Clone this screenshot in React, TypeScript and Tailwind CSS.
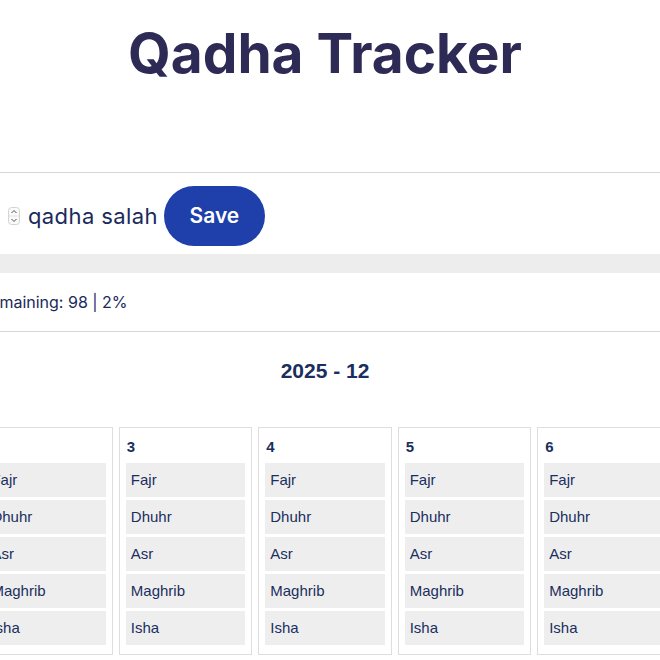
const prayers = ['Fajr', 'Dhuhr', 'Asr', 'Maghrib', 'Isha'];
const days = [1, 2, 3, 4, 5, 6, 7];

function Spinner() {
  return (
    <svg width="12" height="18" viewBox="0 0 12 18" className="block">
      <rect x="0.5" y="0.5" width="11" height="17" rx="3" fill="#fafafa" stroke="#d4d4d4" />
      <line x1="1" y1="9" x2="11" y2="9" stroke="#e2e2e2" />
      <path d="M3.5 6 L6 3.5 L8.5 6" fill="none" stroke="#555" strokeWidth="1" />
      <path d="M3.5 12 L6 14.5 L8.5 12" fill="none" stroke="#555" strokeWidth="1" />
    </svg>
  );
}

function DayCard({ day }: { day: number }) {
  return (
    <div className="border border-[#dedede] px-[6px] pt-[10px] pb-[9px]">
      <div className="font-['Liberation_Sans',Arial,sans-serif] text-[15px] leading-[18px] font-bold text-[#1b2f5e] pl-[1px] mb-[7px]">
        {day}
      </div>
      <div className="flex flex-col gap-[3px]">
        {prayers.map((p) => (
          <div
            key={p}
            className="h-[34px] bg-[#eeeeee] flex items-center pl-[5px] font-['Liberation_Sans',Arial,sans-serif] text-[15px] text-[#1b2f5e]"
          >
            {p}
          </div>
        ))}
      </div>
    </div>
  );
}

export default function App() {
  return (
    <div className="w-[660px] h-[660px] overflow-hidden bg-white">
      <div className="flex justify-center">
        <div className="w-[970px] shrink-0 mr-[10px]">
          <h1 className="mt-[21px] text-center text-[55px] leading-[64px] font-bold text-[#2d2b55] font-['Inter',sans-serif]">
            Qadha Tracker
          </h1>

          <div className="mt-[87px] border-t border-[#d6d6d6]">
            <div className="flex items-center pl-[140px] pt-[13px] font-['Inter',sans-serif] text-[#1a2a5c]">
              <div className="w-[42px] h-[28px] flex items-center justify-end pr-[2px]">
                <Spinner />
              </div>
              <span className="ml-[6px] text-[22px] tracking-[0.4px]">qadha salah</span>
              <button className="ml-[6px] w-[101px] h-[60px] rounded-full bg-[#1f3faa] text-white text-[21px] font-semibold">
                Save
              </button>
            </div>
            <div className="mt-[8px] h-[19px] bg-[#ededed]">
              <div className="h-full w-[2%] bg-[#ededed]" />
            </div>
            <div className="pl-[140px] h-[58px] flex items-center font-['Inter',sans-serif] text-[16px] text-[#1a2a5c]">
              Remaining: 98 | 2%
            </div>
          </div>

          <div className="border-t border-[#d6d6d6]">
            <div className="pt-[27px] text-center font-['Liberation_Sans',Arial,sans-serif] text-[21px] leading-[24px] font-bold text-[#1b2f5e]">
              2025 - 12
            </div>
            <div className="mt-[44px] grid grid-cols-7 gap-[6px]">
              {days.map((d) => (
                <DayCard key={d} day={d} />
              ))}
            </div>
          </div>
        </div>
      </div>
    </div>
  );
}
